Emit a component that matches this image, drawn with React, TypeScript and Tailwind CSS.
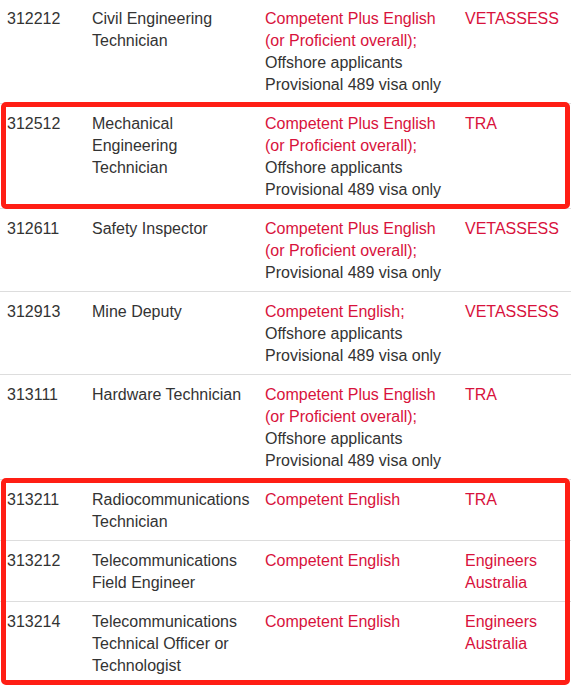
type Row = {
    code: string;
    title: string;
    english: string;
    offshore?: boolean;
    provisional?: boolean;
    body: string;
};

const rows: Row[] = [
    { code: '312212', title: 'Civil Engineering Technician', english: 'Competent Plus English (or Proficient overall);', offshore: true, provisional: true, body: 'VETASSESS' },
    { code: '312512', title: 'Mechanical Engineering Technician', english: 'Competent Plus English (or Proficient overall);', offshore: true, provisional: true, body: 'TRA' },
    { code: '312611', title: 'Safety Inspector', english: 'Competent Plus English (or Proficient overall);', provisional: true, body: 'VETASSESS' },
    { code: '312913', title: 'Mine Deputy', english: 'Competent English;', offshore: true, provisional: true, body: 'VETASSESS' },
    { code: '313111', title: 'Hardware Technician', english: 'Competent Plus English (or Proficient overall);', offshore: true, provisional: true, body: 'TRA' },
    { code: '313211', title: 'Radiocommunications Technician', english: 'Competent English', body: 'TRA' },
    { code: '313212', title: 'Telecommunications Field Engineer', english: 'Competent English', body: 'Engineers Australia' },
    { code: '313214', title: 'Telecommunications Technical Officer or Technologist', english: 'Competent English', body: 'Engineers Australia' },
];

function TableRow({ row, first }: { row: Row; first?: boolean }) {
    return (
        <div className={first ? 'grid grid-cols-[84px_173px_200px_114px] pt-2 pb-[7px]' : 'grid grid-cols-[84px_173px_200px_114px] border-t border-[#dddddd] pt-[9px] pb-[7px]'}>
            <div className="pl-[7px] pr-2">{row.code}</div>
            <div className="px-2">{row.title}</div>
            <div className="px-2">
                <span className="text-[#d8123c]">{row.english}</span>
                {row.offshore && <><br />Offshore applicants</>}
                {row.provisional && <><br />Provisional 489 visa only</>}
            </div>
            <div className="px-2 text-[#d8123c]">{row.body}</div>
        </div>
    );
}

function Highlight({ children }: { children: React.ReactNode }) {
    return (
        <div className="relative">
            {children}
            <div className="absolute left-[1px] right-[1px] -top-[1px] -bottom-[1px] border-[5px] border-[#ff1e14] rounded-[5px] pointer-events-none"></div>
        </div>
    );
}

export default function App() {
    return (
        <div className="w-[571px] h-[686px] overflow-hidden bg-white text-[#333333] text-[16px] leading-[22px] font-['Liberation_Sans',Arial,sans-serif]">
            <TableRow row={rows[0]} first />
            <Highlight>
                <TableRow row={rows[1]} />
            </Highlight>
            <TableRow row={rows[2]} />
            <TableRow row={rows[3]} />
            <TableRow row={rows[4]} />
            <Highlight>
                <TableRow row={rows[5]} />
                <TableRow row={rows[6]} />
                <TableRow row={rows[7]} />
            </Highlight>
        </div>
    );
}
